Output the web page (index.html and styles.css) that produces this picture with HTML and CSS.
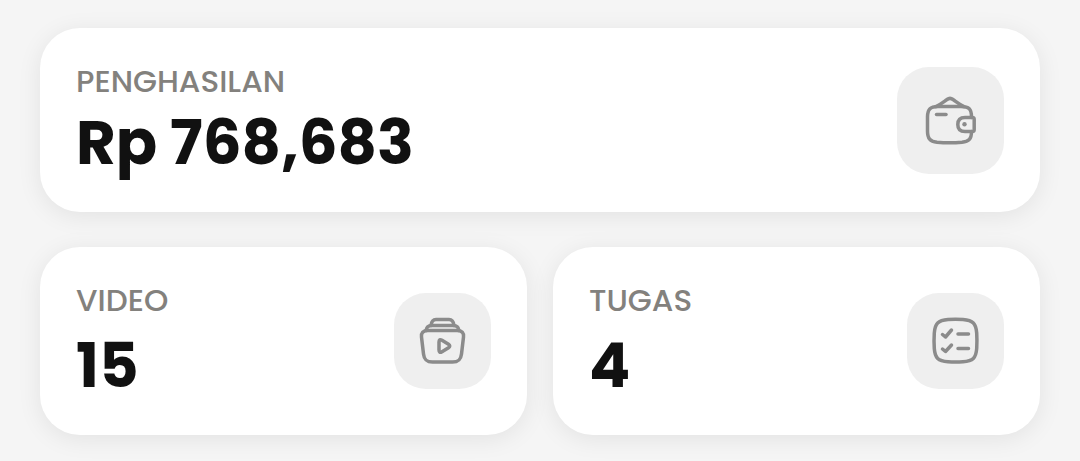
FILE: index.html
```html
<!DOCTYPE html>
<html lang="id">
<head>
<meta charset="utf-8">
<meta name="viewport" content="width=device-width, initial-scale=1">
<title>Ringkasan</title>
<link rel="stylesheet" href="styles.css">
</head>
<body>
<main class="stats">
  <section class="card card-wide">
    <div class="info">
      <h2 class="label">PENGHASILAN</h2>
      <p class="value">Rp 768,683</p>
    </div>
    <div class="tile tile-large">
      <svg class="icon" viewBox="0 0 56 56" aria-hidden="true">
        <path d="M48.500 25.500V25C48.500 17 46 14.500 38 14.500H15C7 14.500 4.500 17.500 4.500 25V39C4.500 46.500 7 49.500 14 50.300C22 51 31 51 39 50.300C46 49.500 48.500 47 48.500 39.500"/>
        <path d="M13 14.500C17.500 12.500 21 9.500 24 7.500C26 6 28 6 30 7.500C33 9.500 36.500 12.500 41 14.500"/>
        <path d="M42 25.500H49.500Q51.200 25.500 51.200 27.500V37.500Q51.200 39.500 49.500 39.500H42C37 39.500 34.800 36.500 34.800 32.500S37 25.500 42 25.500Z"/>
        <path d="M13.500 22.500H23"/>
        <circle class="dot" cx="41.500" cy="32.200" r="2.200"/>
      </svg>
    </div>
  </section>
  <section class="card">
    <div class="info">
      <h2 class="label">VIDEO</h2>
      <p class="value">15</p>
    </div>
    <div class="tile">
      <svg class="icon" viewBox="0 0 56 56" aria-hidden="true">
        <path d="M13 17.500H42C47 17.500 49 20 48.500 24L46.500 41C45.800 47 43.500 49 37.500 49H17.500C11.500 49 9.200 47 8.500 41L6.500 24C6 20 8 17.500 13 17.500Z"/>
        <path d="M11 17.500C11.500 14 13.500 12.500 16.500 12.500H38.500C41.500 12.500 43.500 14 44 17.500"/>
        <path d="M16 12.500C16.500 8.500 18 6.500 21 6.500H34C37 6.500 38.500 8.500 39 12.500"/>
        <path d="M24 29V37Q24 40.500 27 38.700L33.500 34.700Q36 33 33.500 31.300L27 27.300Q24 25.500 24 29Z"/>
      </svg>
    </div>
  </section>
  <section class="card">
    <div class="info">
      <h2 class="label">TUGAS</h2>
      <p class="value">4</p>
    </div>
    <div class="tile">
      <svg class="icon" viewBox="0 0 56 56" aria-hidden="true">
        <path d="M20 6.500Q27.500 6 35 6.500C45 7.300 48 10.500 48.700 20Q49.200 27.500 48.700 35.500C48 45 45 48 35 48.700Q27.500 49.200 20 48.700C10 48 7 45 6.300 35.500Q5.800 27.500 6.300 20C7 10.500 10 7.300 20 6.500Z"/>
        <path d="M14.500 21.500L17.500 24L23.500 17M14.500 36L17.500 38.500L23.500 32M30 21H40.500M30 35.500H40.500"/>
      </svg>
    </div>
  </section>
</main>
</body>
</html>
```
FILE: styles.css
```css
* {
  box-sizing: border-box;
}

body {
  margin: 0;
  background: #f5f5f5;
  color: #111;
  font-family: Poppins, Inter, "Liberation Sans", sans-serif;
}

.stats {
  display: grid;
  grid-template-columns: 1fr 1fr;
  gap: 35px 26px;
  padding: 28px 40px 26px;
}

.card {
  display: flex;
  align-items: center;
  justify-content: space-between;
  padding: 35px 36px;
  border-radius: 40px;
  background: #fff;
  box-shadow: 0 4px 24px rgba(0, 0, 0, 0.08);
}

.card-wide {
  grid-column: 1 / -1;
}

.info {
  display: flex;
  flex-direction: column;
  gap: 14px;
}

.card-wide .info {
  gap: 10px;
}

.label {
  margin: 0;
  color: #83817d;
  font-size: 31px;
  font-weight: 500;
  line-height: 36px;
}

.value {
  margin: 0;
  font-size: 61px;
  font-weight: 700;
  line-height: 68px;
}

.tile {
  display: flex;
  flex: none;
  align-items: center;
  justify-content: center;
  width: 97px;
  height: 96px;
  border-radius: 32px;
  background: #efefef;
}

.tile-large {
  width: 107px;
  height: 107px;
}

.icon {
  width: 56px;
  height: 56px;
  fill: none;
  stroke: #8b8b8b;
  stroke-width: 3.5;
  stroke-linecap: round;
  stroke-linejoin: round;
}

.icon .dot {
  fill: #8b8b8b;
  stroke: none;
}
```
